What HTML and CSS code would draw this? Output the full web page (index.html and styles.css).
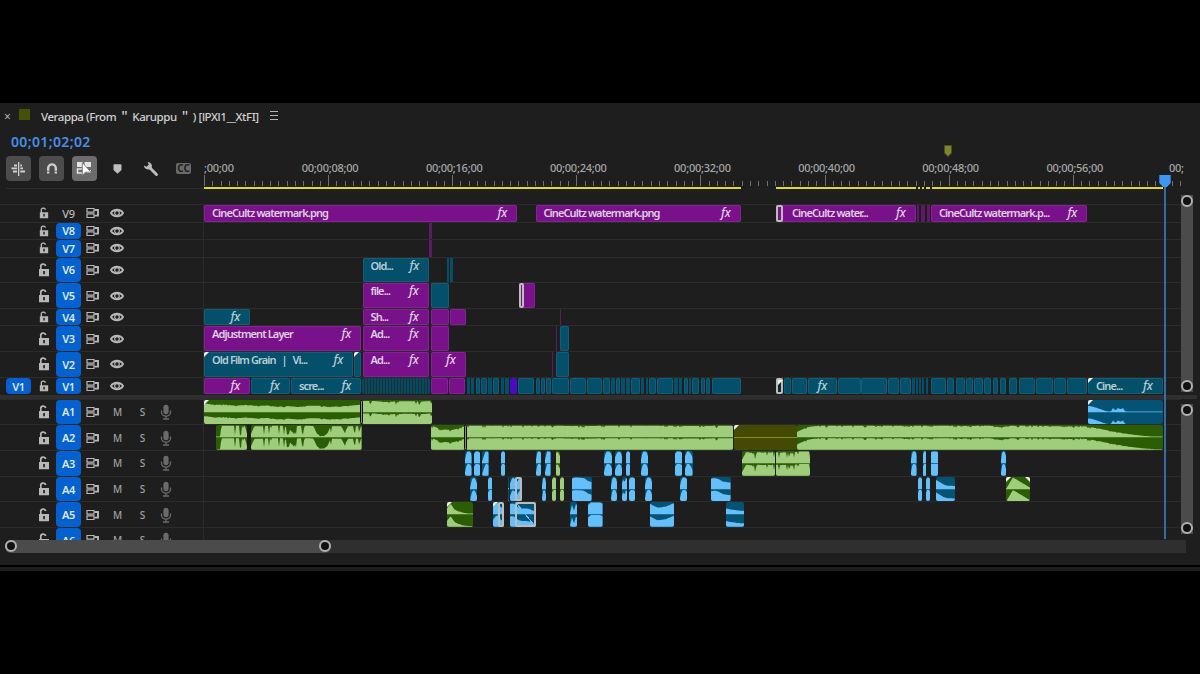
FILE: index.html
```html
<!DOCTYPE html>
<html lang="en">

<head>
  <meta charset="UTF-8" />
  <meta name="viewport" content="width=device-width, initial-scale=1.0" />
  <title>Timeline</title>
  <link rel="stylesheet" href="styles.css">
</head>

<body>
  <!-- icons -->
  <svg class="sprite">
    <symbol id="i-lock" viewBox="0 0 12 14">
      <path d="M2.8 7V4.2a2.5 2.5 0 0 1 4.9-1.2" fill="none" stroke="currentColor" stroke-width="1.6" />
      <path fill-rule="evenodd" d="M1 6h10v7.3H1zM5.2 8v3.2h1.7V8z" fill="currentColor" />
    </symbol>
    <symbol id="i-sync" viewBox="0 0 14 12">
      <path d="M1 1.5h7v3.6H1zM1 6.9h7v3.6H1z" fill="none" stroke="currentColor" stroke-width="1.2" />
      <path d="M8.5 3H12v5.6H8.5" fill="none" stroke="currentColor" stroke-width="1.9" />
    </symbol>
    <symbol id="i-eye" viewBox="0 0 14 10">
      <path d="M1 5C3.5.6 10.5.6 13 5 10.5 9.4 3.5 9.4 1 5z" fill="none" stroke="currentColor" stroke-width="1.9" />
      <circle cx="7" cy="5" r="2.3" fill="none" stroke="currentColor" stroke-width="1.2" />
    </symbol>
    <symbol id="i-mic" viewBox="0 0 12 16">
      <rect x="3.4" y=".8" width="5.2" height="9.4" rx="2.6" fill="currentColor" />
      <path d="M1.5 6.5v1.8a4.5 3.8 0 0 0 9 0V6.5M6 12v3M3 15h6" fill="none" stroke="currentColor" stroke-width="1.3" />
    </symbol>
  </svg>

  <div class="sequence">
    <div class="tab">
      <span class="close">×</span>
      <span class="label-color"></span>
      <span class="title">Verappa (From ＂ Karuppu ＂ ) [lPXl1__XtFI]</span>
      <span class="menu"><i></i><i></i><i></i></span>
    </div>

    <div class="top">
      <div class="tools">
        <div class="timecode">00;01;02;02</div>
        <div class="buttons">
          <span class="tool on">
            <svg width="17" height="16" viewBox="0 0 17 16" fill="#d0d0d0">
              <path d="M8 1h1.3v14H8zM4 3.5h3v2H4zM1.5 6.5H7v1.8H1.5zM3 9.500h4v2H3zM10.300 3.500H12v2h-1.700zM10.300 6.500H13v1.800h-2.700zM10.300 9.500H15v2h-4.700z" />
            </svg>
          </span>
          <span class="tool on">
            <svg width="12" height="13" viewBox="0 0 12 13" fill="none" stroke="#d0d0d0" stroke-width="2.4">
              <path d="M2.2 11.5V6.2a3.8 3.8 0 0 1 7.6 0v5.3" />
              <path d="M0 9.2h4M8 9.2h4" stroke="#4c4c4c" stroke-width=".8" />
            </svg>
          </span>
          <span class="tool active">
            <svg width="17" height="15" viewBox="0 0 17 15">
              <path d="M1 1h6v5H1zM8.5 1H15v5H8.500zM11 9h4v3h-4z" fill="#e6e6e6" />
              <path d="M7 8H1.500v4H6" fill="none" stroke="#e6e6e6" stroke-width="1.5" />
              <path d="M6.300 1.500v13l3.200-3.300h5.500z" fill="#fff" stroke="#6c6c6c" stroke-width=".8" />
            </svg>
          </span>
          <span class="tool">
            <svg width="9" height="10" viewBox="0 0 9 10"><path d="M.5 1q0-.7.7-.7h6.600q.7 0 .7.700v5l-4 3.700-4-3.700z" fill="#bdbdbd" /></svg>
          </span>
          <span class="tool">
            <svg width="16" height="16" viewBox="0 0 16 16">
              <path d="M6.500 6.500l7 7" stroke="#bdbdbd" stroke-width="2.900" stroke-linecap="round" />
              <path d="M4.600.9A4.200 4.200 0 0 1 8.700 6.600 4.200 4.200 0 0 1 1 4.500L3.600 5.800 5.800 3.600z" fill="#bdbdbd" />
            </svg>
          </span>
          <span class="tool cc"><b>CC</b></span>
        </div>
      </div>
      <div class="ruler" id="ruler">
        <svg class="marker" viewBox="0 0 8 12"><path d="M.5.5h7v7.500L4 11.500.5 8z" fill="#7c8532" stroke="#4c5310" /></svg>
      </div>
    </div>

    <div class="area video">
      <div class="tracks" id="video"></div>
      <div class="vscroll"><i></i><i></i></div>
    </div>
    <div class="divider"></div>
    <div class="area audio">
      <div class="tracks" id="audio"></div>
      <div class="vscroll"><i></i><i></i></div>
    </div>

    <div class="hscroll"><div class="thumb"><i></i><i></i></div></div>

    <svg class="playhead" viewBox="0 0 12 364">
      <path d="M5.200 8h1.600v356H5.200z" fill="#3d7fc4" />
      <path d="M.3 0h11.400v8L8 12H4L.3 8z" fill="#3e96f2" />
    </svg>
  </div>
  <div class="next-panel"></div>

  <script src="script.js"></script>
</body>

</html>
```
FILE: styles.css
```css
* {
  box-sizing: border-box;
  margin: 0;
  padding: 0;
}

body {
  padding-top: 103px;
  height: 674px;
  overflow: hidden;
  background: #000;
  color: #c4c4c4;
  font-family: "Noto Sans", "Noto Sans CJK SC", sans-serif;
  font-size: 11px;
}

.sprite {
  display: none;
}

.sequence {
  position: relative;
  display: flex;
  flex-direction: column;
  height: 462px;
  background: #1e1e1e;
}

.next-panel {
  margin-top: 2px;
  height: 4px;
  background: #1e1e1e;
}

/* tab row */
.tab {
  display: flex;
  align-items: center;
  height: 26px;
  padding-left: 4px;
}

.close {
  width: 15px;
  color: #b0b0b0;
  font-size: 12px;
}

.label-color {
  width: 11px;
  height: 11px;
  margin-right: 11px;
  margin-bottom: 4px;
  background: #465006;
}

.title {
  width: 229px;
  margin-bottom: 1px;
  white-space: nowrap;
  font-size: 11.5px;
  font-weight: 500;
  letter-spacing: -.43px;
  color: #d0d0d0;
}

.menu {
  margin-bottom: 1px;
}

.menu i {
  display: block;
  width: 8px;
  height: 1px;
  margin: 3px 0;
  background: #b4b4b4;
}

/* timecode, buttons and ruler */
.top {
  display: flex;
  height: 62px;
}

.tools {
  width: 204px;
  flex: none;
  padding-left: 6px;
}

.timecode {
  height: 27px;
  padding-left: 5px;
  line-height: 26px;
  font-size: 14px;
  font-weight: 600;
  letter-spacing: .35px;
  color: #4690e8;
}

.buttons {
  display: flex;
  gap: 8px;
  height: 33px;
  border-bottom: 1px solid #2c2c2c;
}

.tool {
  display: flex;
  align-items: center;
  justify-content: center;
  width: 25px;
  height: 25px;
  border-radius: 4px;
}

.tool.on {
  background: #4c4c4c;
}

.tool.active {
  background: #6c6c6c;
}

.cc b {
  padding: 0 1px;
  border-radius: 2px;
  background: #6a6a6a;
  color: #1e1e1e;
  font-size: 10px;
  line-height: 11px;
}

.ruler {
  position: relative;
  width: 981px;
  overflow: hidden;
}

.ruler .time {
  position: absolute;
  top: 31px;
  width: 80px;
  margin-left: -38px;
  line-height: 16px;
  text-align: center;
  font-size: 11px;
  font-weight: 500;
  letter-spacing: -.25px;
  color: #a8a8a8;
}

.ruler .time.first,
.ruler .time.last {
  width: auto;
  margin-left: 0;
}

.ruler .tick {
  position: absolute;
  top: 52px;
  width: 1px;
  height: 5px;
  background: #707070;
}

.ruler .tick.major {
  top: 46px;
  height: 11px;
}

.ruler .render {
  position: absolute;
  top: 58px;
  height: 2px;
  background: #e0d92c;
}

.marker {
  position: absolute;
  left: 740px;
  top: 16px;
  width: 8px;
  height: 12px;
}

/* tracks */
.area {
  display: flex;
  overflow: hidden;
}

.video {
  height: 203.6px;
}

.audio {
  height: 141px;
}

.tracks {
  width: 1181px;
  flex: none;
}

.video .tracks {
  padding-top: 13px;
}

.divider {
  height: 4px;
  width: 1197px;
  background: #2f2f30;
}

.track {
  display: flex;
  height: 25.7px;
  border-top: 1px solid #2b2b2b;
}

.track.short {
  height: 17.5px;
}

.head {
  display: flex;
  align-items: center;
  width: 204px;
  flex: none;
  padding-left: 6px;
  border-right: 1px solid #2b2b2b;
  color: #b8b8b8;
}

.source,
.target {
  display: flex;
  align-items: center;
  justify-content: center;
  width: 25px;
  align-self: stretch;
  border-radius: 4px;
  font-size: 11px;
  font-weight: 600;
  letter-spacing: -.3px;
}

.source.on,
.target.on {
  background: #0561cf;
  color: #dce9fa;
}

.target {
  margin-right: 5px;
}

.target.off {
  font-weight: 500;
}

.lock {
  width: 12px;
  height: 14px;
  margin: 0 6px 0 7px;
}

.short .lock {
  width: 10px;
  height: 12px;
  margin: 0 7px 0 8px;
}

.sync {
  width: 14px;
  height: 12px;
}

.eye {
  width: 14px;
  height: 10px;
  margin-left: 10px;
}

.ms {
  width: 25px;
  text-align: center;
  font-size: 10px;
  font-weight: 500;
  color: #a0a0a0;
}

.ms.first {
  margin-left: 5px;
}

.mic {
  width: 12px;
  height: 16px;
  margin-left: 5px;
  color: #6a6a6a;
}

.lane {
  position: relative;
  flex: 1;
}

.clip {
  position: absolute;
  top: 0;
  bottom: 0;
  display: flex;
  overflow: hidden;
  border-radius: 2px;
  font-size: 11px;
  line-height: 16px;
  letter-spacing: -.9px;
  white-space: nowrap;
  font-weight: 600;
  color: #dfcfe4;
}

.clip.labeled {
  padding: 0 10px 0 8px;
}

.clip.indent {
  padding-left: 16px;
}

.clip .fx {
  margin-left: auto;
  font-style: italic;
  font-weight: 500;
  font-size: 12px;
  letter-spacing: -.3px;
}

.clip.thin {
  border-radius: 0;
}

.purple {
  background: #79118a;
  box-shadow: inset 0 0 0 1px #842394;
}

.purple.thin {
  background: #5c1a67;
  box-shadow: none;
}

.teal {
  background: #04506b;
  box-shadow: inset 0 0 0 1px #145d76;
  color: #b9cdd6;
}

.teal.thin {
  box-shadow: none;
}

.violet {
  background: #4a0cc0;
}

.stripes {
  background: repeating-linear-gradient(90deg, #064a60 0 2px, #1c2f37 2px 3px);
}

.olive {
  background: linear-gradient(#454a02 48%, #85900c 48% 52%, #454a02 52%);
}

.wave svg {
  display: block;
  width: 100%;
  height: 100%;
}

.green {
  background: #2b5d05;
  color: #a0cd7c;
}

.blue {
  background: #055374;
  color: #65bffa;
}

.corner::before,
.corner-end::after {
  content: "";
  position: absolute;
  top: 0;
  left: 0;
  border-top: 5px solid #f0f0f0;
  border-right: 5px solid transparent;
}

.corner-end::after {
  left: auto;
  right: 0;
  border-right: 0;
  border-left: 5px solid transparent;
}

/* transitions */
.fade {
  position: absolute;
  top: 0;
  bottom: 0;
  border: 2px solid #bcbcbc;
  border-radius: 2px;
}

.fade.dark {
  border: 1px solid #101010;
  background: #8a8a8a;
}

.fade.cut {
  background: #16262e;
}

.fade.fill {
  background: linear-gradient(to top right, transparent 48%, #65bffa 48% 52%, transparent 52%);
}

/* scroll bars */
.vscroll {
  display: flex;
  flex-direction: column;
  justify-content: space-between;
  width: 12px;
  background: #4b4b4b;
}

.video .vscroll {
  margin: 4px 0 3px;
}

.audio .vscroll {
  margin: 5px 0 6px;
}

.vscroll i,
.thumb i {
  display: block;
  width: 12px;
  height: 12px;
  border: 2px solid #b2b2b2;
  border-radius: 50%;
  background: #111;
}

.hscroll {
  width: 1181px;
  height: 13px;
  margin-left: 5px;
  border-radius: 6px 0 0 6px;
  background: #2f2f2f;
}

.thumb {
  display: flex;
  align-items: center;
  justify-content: space-between;
  width: 326px;
  height: 13px;
  border-radius: 6px;
  background: #4b4b4b;
}

.playhead {
  position: absolute;
  left: 1159px;
  top: 72px;
  width: 12px;
  height: 364px;
}
```
FILE: script.js
```js
const ORIGIN = 204

// clips: [start, end, color, name, fx, extra classes]
const P = 'purple'
const T = 'teal'
const video = [
  { id: 'V9', short: true, clips: [
    [204, 517, P, 'CineCultz watermark.png', 1],
    [535.5, 740.5, P, 'CineCultz watermark.png', 1],
    [776, 915.5, P, 'CineCultz water...', 1, 'indent'],
    [917, 919, P], [921, 924.5, P], [926.5, 930, P],
    [931, 1087, P, 'CineCultz watermark.p...', 1]
  ], fades: [[776, 783]] },
  { id: 'V8', short: true, clips: [[428.5, 431.5, P]] },
  { id: 'V7', short: true, clips: [[428.5, 431.5, P]] },
  { id: 'V6', clips: [[362.5, 429, T, 'Old...', 1], [447, 449, T], [450, 453, T]] },
  { id: 'V5', clips: [[362.5, 428.5, P, 'file...', 1], [430.5, 449, T], [519, 534.5, P]], fades: [[519, 524]] },
  { id: 'V4', short: true, clips: [
    [204, 250, T, '', 1], [362.5, 428.5, P, 'Sh...', 1], [430.5, 448.5, P], [449.5, 465.5, P], [560, 561, P]
  ] },
  { id: 'V3', clips: [
    [204, 361, P, 'Adjustment Layer', 1], [362.5, 428.5, P, 'Ad...', 1], [430.5, 449, P], [556, 557, P], [560, 568.5, T]
  ] },
  { id: 'V2', clips: [
    [204, 353, T, 'Old Film Grain &nbsp;&nbsp;|&nbsp;&nbsp; Vi...', 1, 'corner'], [354, 361, T, '', 0, 'corner'],
    [362.5, 428.5, P, 'Ad...', 1], [430.5, 465.5, P, '', 1], [552, 553, P], [556, 568.5, T]
  ] },
  { id: 'V1', short: true, source: true, clips: [
    [204, 250, P, '', 1], [251, 289.5, T, '', 1], [291, 361, T, 'scre...', 1],
    [362, 430, 'stripes'], [430.5, 448, P], [449, 465, P],
    [509.5, 516.5, 'violet'],
    [776, 783, T],
    [808, 837, T, '', 1],
    [1088, 1162.5, T, 'Cine...', 1, 'corner']
  ], fades: [[776, 783, 'cut corner']] }
]

// short cuts on V1
const cuts = [
  466.5, 470, 471, 474, 475.5, 479.5, 481, 486.5, 488, 491.5, 493, 499, 500.5, 504, 505, 508.5,
  518, 534, 535.5, 539.5, 540.5, 544.5, 546, 551, 552, 568.5, 569.5, 586, 587, 601.5, 602.5, 609.5,
  611, 614.5, 615.5, 620, 621, 624.5, 626, 629.5, 630.5, 639.5, 641, 644, 645.5, 648, 649, 656, 657, 673,
  674, 677.5, 678.5, 682, 683.5, 687.5, 688.5, 691, 692, 699, 700.5, 705, 706, 710, 712, 740.5,
  783.5, 791, 792, 807, 838, 860.5, 861, 887, 888, 899, 900, 911, 912, 914.5, 916, 918, 919, 920.5, 922, 924,
  925.5, 927.5, 931, 946, 947, 954, 956, 965, 966, 973, 974, 983, 984, 991, 992.5, 998, 999.5, 1006,
  1008.5, 1017, 1018.5, 1034.5, 1036, 1053, 1054, 1065.5, 1067, 1087
]
const v1 = video[8]
for (let i = 0; i < cuts.length; i += 2) v1.clips.push([cuts[i], cuts[i + 1], T])

// audio clips: [start, end, color, levels, roughness, extra classes]
const G = 'green'
const B = 'blue'
const hump = [.3, .8, 1, 1, 1, .9, .6]
const full = [.8, 1, 1, 1, .9]
const audio = [
  { id: 'A1', clips: [
    [204, 361, G, [.75, .62, .66, .55, .62, .54, .58, .46, .52, .45, .55, .55, .45, .5, .55, .65], .16, 'corner'],
    [361.5, 431.5, G, [.95, .97, .87, .92, .95, .9, .97], .3],
    [1088, 1162.5, B, [.55, .52, .48, .4, .33, .25, .18, .1, .06, .03, .35, .15, .35, .25, .35, .03, .03, .03, .03, .03, .03, .03, .03, .03, .03, .03, .03, .03, .03, .03, .03], .04, 'corner']
  ], fades: [[359.5, 362.5, 'dark']] },
  { id: 'A2', clips: [
    [216, 247, G, [0, 0, 0, .97, .97, .97, .97, .97, .97, .97, .97, .97, .97, .97, .97, .97, .97, .97, .9, .3], 1.1],
    [251, 361.5, G, [.3, .95, .95, .95, .95, .97, .97, .97, .97, .97, .85, .7, .4, .95, .97, .97, .97, .97, .95, .3, .1, .1, .3, .95, .95, .95, .95, .4, .95, .95, .95, .95, .95], .9],
    [430.5, 465, G, [1, .85, .62, .66, .6, .7, .85, .95], .25],
    [466, 733, G, [.98, .98, .98, .96, .98, .98, .96, .98], .18],
    [733.5, 797, 'olive', null, 0, 'corner'],
    [797, 1162.5, G, [.45, .85, .98, .98, .98, .98, .98, .98, .96, .98, .98, .96, .98, .98, .98, .98, .97, .95, .98, .98, .84, .97, .98, .98, .97, .94, .95, .92, .96, .85, .68, .5, .35, .22, .12, .05, .03], .18]
  ], fades: [[464, 467, 'dark']] },
  { id: 'A3', clips: [
    [465, 471.5, B, hump], [474, 480, B, full], [482, 488.5, B, [.1, .6, 1, 1, .9]], [500.5, 504.5, B, full],
    [535.5, 541, B, hump], [545, 550.5, B, [.3, 1, 1, 1]], [556, 560, G, [.95, .95, .6]],
    [603.5, 611.5, B, hump], [614.5, 622, B, [.5, .9, 1, .9, .2]], [625.5, 629.5, B, full], [641, 648, B, hump],
    [675, 682, B, full], [685, 692.5, B, [.6, 1, 1, .8, .4]],
    [741.5, 774.5, G, [.3, .95, .9, .9, .95, .9, .95, .9, 1], .7], [775.5, 809.5, G, [.95, .9, .95, .95, .95, 1, 1, 1], .6],
    [911, 916.5, B, hump], [922.5, 926, B, full], [930.5, 937.5, B, [1, 1, 1, 1]], [1000.5, 1005.5, B, hump]
  ] },
  { id: 'A4', clips: [
    [469.5, 476.5, B, [.1, .8, 1, .9, .5]], [487.5, 492, B, full], [507.5, 509, B, [.1, .1]],
    [510, 522, B, [.5, 1, .9, .6, 1, .8]], [541.5, 545.5, B, hump], [551.5, 556, G, full], [559.5, 563.5, G, full],
    [572, 591.5, B, [.95, 1, .98, .95, .7, .6]], [610.5, 616.5, B, hump], [621.5, 626.5, B, [.5, .9, .5, 1, .9]],
    [629, 635, B, full], [645, 652, B, hump], [679.5, 687, B, hump], [711, 730.5, B, [.9, .95, .85, .65, .6, .55]],
    [917.5, 921.5, B, full], [926, 930, B, full], [935.5, 954.5, B, [.8, .6, .4, .3, .3, .25]],
    [1006, 1030, G, [0, .5, 1, .85, .65, .5, .3, .15], .1, 'corner corner-end']
  ], fades: [[514.5, 522]] },
  { id: 'A5', clips: [
    [447, 473, G, [.5, .9, .4, .25, .15, .08, .05, .05], 0, 'corner'], [493, 504, B, [.6, .9, 1, .5, .8], 0, 'corner'],
    [509.5, 536, B, [.9, .9, .6, .5, .5, .45, .3, .1]], [569.5, 577, B, [.1, .8, .3, .9, .6]], [588, 602.5, B, [.8, 1, 1, 1, 1, .9]],
    [649.5, 673.5, B, [.9, .7, .55, .6, .65, .8, .95]], [725.5, 743.5, B, [.5, .4, .35, .3, .3]]
  ], fades: [[497.5, 504], [515, 536, 'fill']] },
  { id: 'A6', clips: [] }
]

// repeatable noise so the waveforms never change
let seed = 7
function rnd() {
  seed = (seed * 16807) % 2147483647
  return seed / 2147483647
}

function wave(w, levels, rough) {
  let top = ''
  let low = ''
  const steps = Math.ceil(w)
  for (let i = 0; i <= steps; i++) {
    const p = i / steps * (levels.length - 1)
    const a = Math.floor(p)
    const b = Math.min(a + 1, levels.length - 1)
    let v = levels[a] + (levels[b] - levels[a]) * (p - a)
    const spike = rnd() > .78 ? rnd() : 0
    v -= spike * rough * v
    v = Math.max(v, .04)
    const x = Math.min(i, w)
    top += `L${x} ${(11.8 - v * 11.3).toFixed(1)}`
    low += `L${x} ${(24 - v * 11.3).toFixed(1)}`
  }
  return `<svg viewBox="0 0 ${w} 24" preserveAspectRatio="none"><path fill="currentColor" d="M0 11.8${top}L${w} 11.8zM0 24${low}L${w} 24z"/></svg>`
}

function place(start, end) {
  return `left:${start - ORIGIN}px;width:${end - start}px`
}

function icon(name) {
  return `<svg class="${name}"><use href="#i-${name}"/></svg>`
}

function drawTrack(track, isAudio) {
  const clips = track.clips.map(([s, e, color, a, b, cls = '']) => {
    if (e - s < 4) cls += ' thin'
    let inner = ''
    if (isAudio) {
      inner = a ? wave(e - s, a, b || 0) : ''
      cls += ' wave'
    } else if (a || b) {
      inner = (a ? `<span class="name">${a}</span>` : '') + (b ? '<span class="fx">fx</span>' : '')
      cls = 'labeled ' + cls
    }
    return `<div class="clip ${color} ${cls}" style="${place(s, e)}">${inner}</div>`
  }).join('')
  const fades = (track.fades || []).map(([s, e, cls = '']) => `<div class="fade ${cls}" style="${place(s, e)}"></div>`).join('')
  const controls = isAudio
    ? `<span class="ms first">M</span><span class="ms">S</span>${icon('mic')}`
    : icon('eye')
  return `
    <div class="track ${track.short ? 'short' : ''}">
      <div class="head">
        <span class="source ${track.source ? 'on' : ''}">${track.source ? 'V1' : ''}</span>
        ${icon('lock')}
        <span class="target ${track.id === 'V9' ? 'off' : 'on'}">${track.id}</span>
        ${icon('sync')}${controls}
      </div>
      <div class="lane">${clips}${fades}</div>
    </div>`
}

document.querySelector('#video').innerHTML = video.map(t => drawTrack(t, false)).join('')
document.querySelector('#audio').innerHTML = audio.map(t => drawTrack(t, true)).join('')

// ruler
const STEP = 124.1
let marks = '<span class="time first" style="left:0px">;00;00</span><span class="time last" style="left:965px">00;</span>'
for (let i = 0; i < 8; i++) {
  const sec = String(i * 8).padStart(2, '0')
  if (i) marks += `<span class="time" style="left:${i * STEP}px">00;00;${sec};00</span>`
  for (let j = 0; j < 15; j++) {
    const x = i * STEP + j * STEP / 15
    if (x < 978) marks += `<i class="tick ${j ? '' : 'major'}" style="left:${x}px"></i>`
  }
}
const rendered = [[204, 741], [775.5, 916], [917.5, 920], [921.5, 924], [925.5, 930], [931.5, 1163]]
rendered.forEach(([s, e]) => { marks += `<i class="render" style="${place(s, e)}"></i>` })
document.querySelector('#ruler').insertAdjacentHTML('beforeend', marks)
```
